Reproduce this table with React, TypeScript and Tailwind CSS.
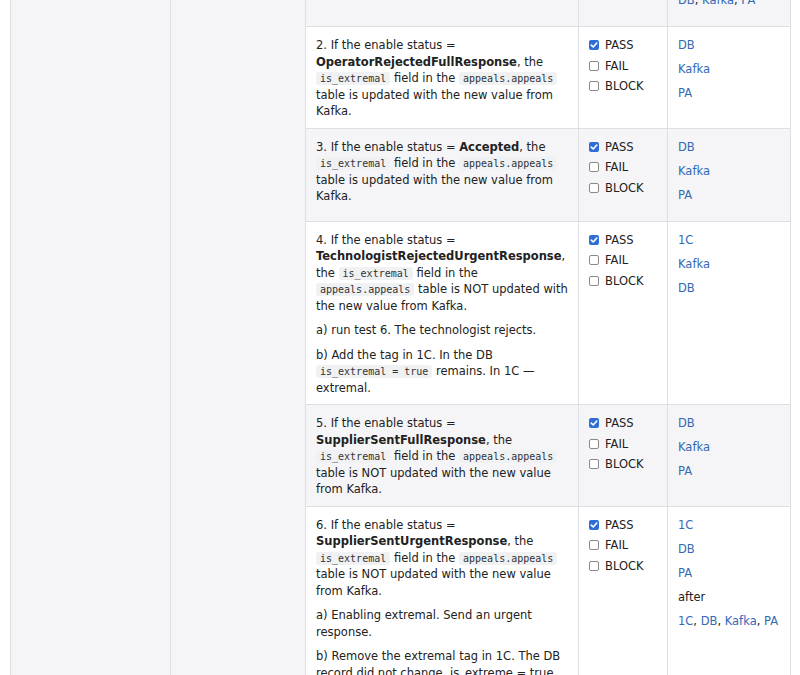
import React from "react";

const Code = ({ children }: { children: React.ReactNode }) => (
  <code className="inline-block whitespace-nowrap rounded-[3px] bg-[#f0f1f3] px-1 text-[10px] leading-[13px] text-[#333] [font-family:'DejaVu_Sans_Mono',monospace]">
    {children}
  </code>
);

const L = ({ children }: { children: React.ReactNode }) => (
  <span className="text-[#3369b5]">{children}</span>
);

const Box = ({ checked }: { checked?: boolean }) =>
  checked ? (
    <span className="flex h-[10px] w-[10px] items-center justify-center rounded-[2px] bg-[#2f6fd5]">
      <svg width="8" height="8" viewBox="0 0 10 10">
        <path d="M1.6 5.2 L4 7.5 L8.5 2.5" fill="none" stroke="white" strokeWidth="2" strokeLinecap="round" strokeLinejoin="round" />
      </svg>
    </span>
  ) : (
    <span className="h-[10px] w-[10px] rounded-[2px] border border-[#8a8a8a] bg-white" />
  );

const Checks = () => (
  <div className="flex flex-col gap-[4px]">
    {[
      ["PASS", true],
      ["FAIL", false],
      ["BLOCK", false],
    ].map(([t, c]) => (
      <div key={t as string} className="flex items-center gap-[6px]">
        <Box checked={c as boolean} />
        <span>{t as string}</span>
      </div>
    ))}
  </div>
);

const Links = ({ items }: { items: React.ReactNode[] }) => (
  <div className="leading-[16px]">
    {items.map((it, i) => (
      <p key={i} className="mb-2">
        {it}
      </p>
    ))}
  </div>
);

const P = ({ children }: { children: React.ReactNode }) => <p className="mb-2 last:mb-0">{children}</p>;

const cell = "border border-[#dcdfe3] px-[10px] pt-[10px] align-top";

type Row = { gray: boolean; text: React.ReactNode; links: React.ReactNode[]; checks?: boolean };

export default function App() {
  const rows: Row[] = [
    {
      gray: true,
      checks: false,
      text: <P>&nbsp;</P>,
      links: [
        "after",
        <>
          <L>DB</L>, <L>Kafka</L>, <L>PA</L>
        </>,
      ],
    },
    {
      gray: false,
      text: (
        <P>
          2. If the enable status = <b>OperatorRejectedFullResponse</b>, the <Code>is_extremal</Code> field in the{" "}
          <Code>appeals.appeals</Code> table is updated with the new value from Kafka.
        </P>
      ),
      links: [<L>DB</L>, <L>Kafka</L>, <L>PA</L>],
    },
    {
      gray: true,
      text: (
        <P>
          3. If the enable status = <b>Accepted</b>, the <Code>is_extremal</Code> field in the{" "}
          <Code>appeals.appeals</Code> table is updated with the new value from Kafka.
        </P>
      ),
      links: [<L>DB</L>, <L>Kafka</L>, <L>PA</L>],
    },
    {
      gray: false,
      text: (
        <>
          <P>
            4. If the enable status = <b>TechnologistRejectedUrgentResponse</b>, the <Code>is_extremal</Code> field in
            the <Code>appeals.appeals</Code> table is NOT updated with the new value from Kafka.
          </P>
          <P>a) run test 6. The technologist rejects.</P>
          <P>
            b) Add the tag in 1C. In the DB <Code>is_extremal = true</Code> remains. In 1C — extremal.
          </P>
        </>
      ),
      links: [<L>1C</L>, <L>Kafka</L>, <L>DB</L>],
    },
    {
      gray: true,
      text: (
        <P>
          5. If the enable status = <b>SupplierSentFullResponse</b>, the <Code>is_extremal</Code> field in the{" "}
          <Code>appeals.appeals</Code> table is NOT updated with the new value from Kafka.
        </P>
      ),
      links: [<L>DB</L>, <L>Kafka</L>, <L>PA</L>],
    },
    {
      gray: false,
      text: (
        <>
          <P>
            6. If the enable status = <b>SupplierSentUrgentResponse</b>, the <Code>is_extremal</Code> field in the{" "}
            <Code>appeals.appeals</Code> table is NOT updated with the new value from Kafka.
          </P>
          <P>a) Enabling extremal. Send an urgent response.</P>
          <P>b) Remove the extremal tag in 1C. The DB record did not change. is_extreme = true. In 1C — not extremal.</P>
        </>
      ),
      links: [
        <L>1C</L>,
        <L>DB</L>,
        <L>PA</L>,
        "after",
        <>
          <L>1C</L>, <L>DB</L>, <L>Kafka</L>, <L>PA</L>
        </>,
      ],
    },
  ];

  return (
    <div className="h-[675px] w-[800px] overflow-hidden bg-white text-[11.5px] leading-[16.5px] text-[#222] [font-family:'DejaVu_Sans',sans-serif]">
      <table className="-mt-[43px] ml-[10px] w-[780px] table-fixed border-collapse">
        <colgroup>
          <col className="w-[160px]" />
          <col className="w-[135px]" />
          <col className="w-[273px]" />
          <col className="w-[89px]" />
          <col className="w-[123px]" />
        </colgroup>
        <tbody>
          {rows.map((r, i) => (
            <tr key={i} className={r.gray ? "bg-[#f5f5f7]" : "bg-white"}>
              {i === 0 && (
                <>
                  <td rowSpan={rows.length} className="border border-[#dcdfe3] bg-[#f5f5f7]" />
                  <td rowSpan={rows.length} className="border border-[#dcdfe3] bg-[#f5f5f7]" />
                </>
              )}
              <td className={`${cell} pb-[8px]`}>{r.text}</td>
              <td className={`${cell} pb-[8px]`}>{r.checks === false ? null : <Checks />}</td>
              <td className={`${cell} pb-[10px]`}>
                <Links items={r.links} />
              </td>
            </tr>
          ))}
        </tbody>
      </table>
    </div>
  );
}
